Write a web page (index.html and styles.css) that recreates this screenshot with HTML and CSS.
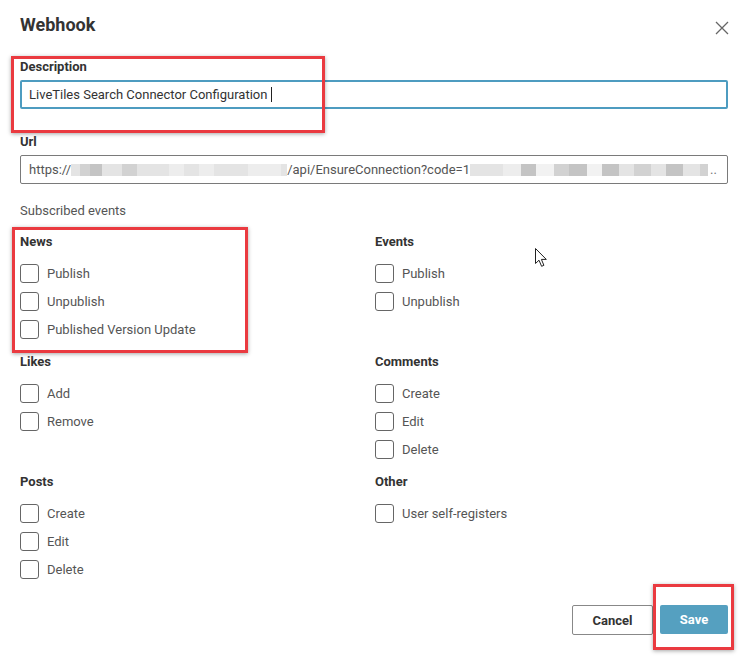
FILE: index.html
```html
<!DOCTYPE html>
<html>
<head>
<meta charset="utf-8">
<link rel="stylesheet" href="styles.css">
</head>
<body>
<div class="dialog">
  <div class="header">
    <h1 class="title">Webhook</h1>
    <button class="close" aria-label="Close">
      <svg width="14" height="14" viewBox="0 0 14 14"><path d="M1 1L13 13M13 1L1 13" stroke="#666" stroke-width="1.3" fill="none"/></svg>
    </button>
  </div>

  <div class="field field-desc">
    <label class="label">Description</label>
    <div class="input input-focus">LiveTiles Search Connector Configuration <span class="caret"></span></div>
    <div class="hl hl-desc"></div>
  </div>

  <div class="field field-url">
    <label class="label">Url</label>
    <div class="input input-url"><span>https://</span><span class="blur"><i class="s1 w9"></i><i class="s2 w10"></i><i class="s3 w12"></i><i class="s1 w20"></i><i class="s2 w15"></i><i class="s1 w32"></i><i class="s4 w15"></i><i class="s1 w15"></i><i class="s4 w15"></i><i class="s1 w14"></i><i class="s1 w20"></i><i class="s4 w33"></i><i class="s1 w6"></i></span><span>/api/EnsureConnection?code=1</span><span class="blur"><i class="s1 w33"></i><i class="s4 w18"></i><i class="s3 w15"></i><i class="s5 w18"></i><i class="s2 w15"></i><i class="s3 w18"></i><i class="s5 w15"></i><i class="s3 w17"></i><i class="s1 w15"></i><i class="s2 w17"></i><i class="s1 w15"></i><i class="s3 w17"></i><i class="s1 w17"></i><i class="s2 w8"></i></span><span class="dots">..</span></div>
  </div>

  <div class="sub">Subscribed events</div>

  <div class="grid">
    <div class="section">
      <div class="heading">News</div>
      <label class="cb"><span class="box"></span>Publish</label>
      <label class="cb"><span class="box"></span>Unpublish</label>
      <label class="cb"><span class="box"></span>Published Version Update</label>
      <div class="hl hl-news"></div>
    </div>
    <div class="section">
      <div class="heading">Events</div>
      <label class="cb"><span class="box"></span>Publish</label>
      <label class="cb"><span class="box"></span>Unpublish</label>
    </div>
    <div class="section">
      <div class="heading">Likes</div>
      <label class="cb"><span class="box"></span>Add</label>
      <label class="cb"><span class="box"></span>Remove</label>
    </div>
    <div class="section">
      <div class="heading">Comments</div>
      <label class="cb"><span class="box"></span>Create</label>
      <label class="cb"><span class="box"></span>Edit</label>
      <label class="cb"><span class="box"></span>Delete</label>
    </div>
    <div class="section">
      <div class="heading">Posts</div>
      <label class="cb"><span class="box"></span>Create</label>
      <label class="cb"><span class="box"></span>Edit</label>
      <label class="cb"><span class="box"></span>Delete</label>
    </div>
    <div class="section">
      <div class="heading">Other</div>
      <label class="cb"><span class="box"></span>User self-registers</label>
    </div>
  </div>

  <div class="footer">
    <button class="btn btn-cancel">Cancel</button>
    <span class="save-wrap">
      <button class="btn btn-save">Save</button>
      <span class="hl hl-save"></span>
    </span>
  </div>

  <svg class="pointer" width="13" height="20" viewBox="0 0 13 20"><path d="M0.5 0.5L0.5 15.5L4 12.2L6.6 18.3L8.9 17.3L6.4 11.4L11.3 11.4Z" fill="#fff" stroke="#222" stroke-width="1" stroke-linejoin="round"/></svg>
</div>
</body>
</html>
```

FILE: styles.css
```css
* { box-sizing: border-box; }
html, body { margin: 0; padding: 0; background: #fff; }
body { font-family: Roboto, "Liberation Sans", sans-serif; color: #333; }

.dialog {
  position: relative;
  width: 751px;
  height: 658px;
  padding: 14px 23px 0 20px;
}

.header {
  display: flex;
  justify-content: space-between;
  align-items: center;
  height: 22px;
}
.title {
  margin: 0;
  font-size: 18px;
  font-weight: 700;
  line-height: 22px;
  color: #333;
}
.close {
  border: 0;
  background: none;
  padding: 0;
  margin: 6px -1px 0 0;
  width: 14px;
  height: 14px;
  display: flex;
}

.field { position: relative; }
.field-desc { margin-top: 23px; }
.field-url { margin-top: 25px; }
.label {
  display: block;
  font-size: 13px;
  font-weight: 700;
  line-height: 16px;
  color: #333;
  margin-bottom: 5px;
}
.input {
  height: 29px;
  border: 1px solid #7a7a7a;
  border-radius: 2px;
  padding: 0 8px;
  font-size: 13px;
  line-height: 27px;
  color: #444;
  white-space: nowrap;
  overflow: hidden;
  display: flex;
  align-items: center;
}
.input-focus {
  border: 2px solid #4d9cc0;
  padding-left: 7px;
  color: #333;
}
.caret {
  display: inline-block;
  width: 1px;
  height: 15px;
  background: #222;
  margin-left: 4px;
}
.input-url { color: #555; }
.blur { display: inline-flex; height: 12px; align-items: stretch; }
.blur i { display: block; height: 12px; }
.s1 { background: #e4e4e4; }
.s2 { background: #d2d2d2; }
.s3 { background: #c4c4c4; }
.s4 { background: #ededed; }
.s5 { background: #f2f2f2; }
.w6 { width: 6px; } .w8 { width: 8px; } .w9 { width: 9px; } .w10 { width: 10px; } .w12 { width: 12px; }
.w14 { width: 14px; } .w15 { width: 15px; } .w17 { width: 17px; } .w18 { width: 18px; }
.w20 { width: 20px; } .w32 { width: 32px; } .w33 { width: 33px; }
.dots { margin-left: 2px; color: #777; }

.sub {
  margin-top: 19px;
  font-size: 13px;
  line-height: 16px;
  color: #555;
}

.grid {
  margin-top: 13px;
  display: grid;
  grid-template-columns: 355px 1fr;
  grid-auto-rows: 111px;
  row-gap: 9px;
}
.section { position: relative; }
.heading {
  font-size: 13px;
  font-weight: 700;
  line-height: 20px;
  color: #333;
  margin-bottom: 7px;
}
.cb {
  display: flex;
  align-items: center;
  height: 28px;
  font-size: 13px;
  color: #555;
}
.box {
  width: 19px;
  height: 19px;
  border: 1.5px solid #666;
  border-radius: 3px;
  margin-right: 8px;
  flex: none;
}

.footer {
  margin-top: 22px;
  display: flex;
  justify-content: flex-end;
  gap: 7px;
}
.btn {
  font-family: Roboto, "Liberation Sans", sans-serif;
  font-size: 13px;
  font-weight: 700;
  height: 30px;
  border-radius: 2px;
  padding: 0;
  cursor: pointer;
}
.btn-cancel {
  width: 81px;
  background: #fff;
  border: 1px solid #888;
  color: #333;
}
.save-wrap { position: relative; display: flex; }
.btn-save {
  width: 68px;
  height: 29px;
  background: #55a0c0;
  border: 0;
  color: #fff;
}

.hl {
  position: absolute;
  border: 3px solid #ea3a40;
  box-shadow: 0 1px 4px rgba(0,0,0,0.35);
  pointer-events: none;
}
.hl-desc { left: -9px; top: -3px; width: 314px; height: 77px; }
.hl-news { left: -8px; top: -5px; width: 236px; height: 126px; }
.hl-save { left: -7px; top: -21px; width: 81px; height: 66px; }

.pointer { position: absolute; left: 535px; top: 248px; }
```
